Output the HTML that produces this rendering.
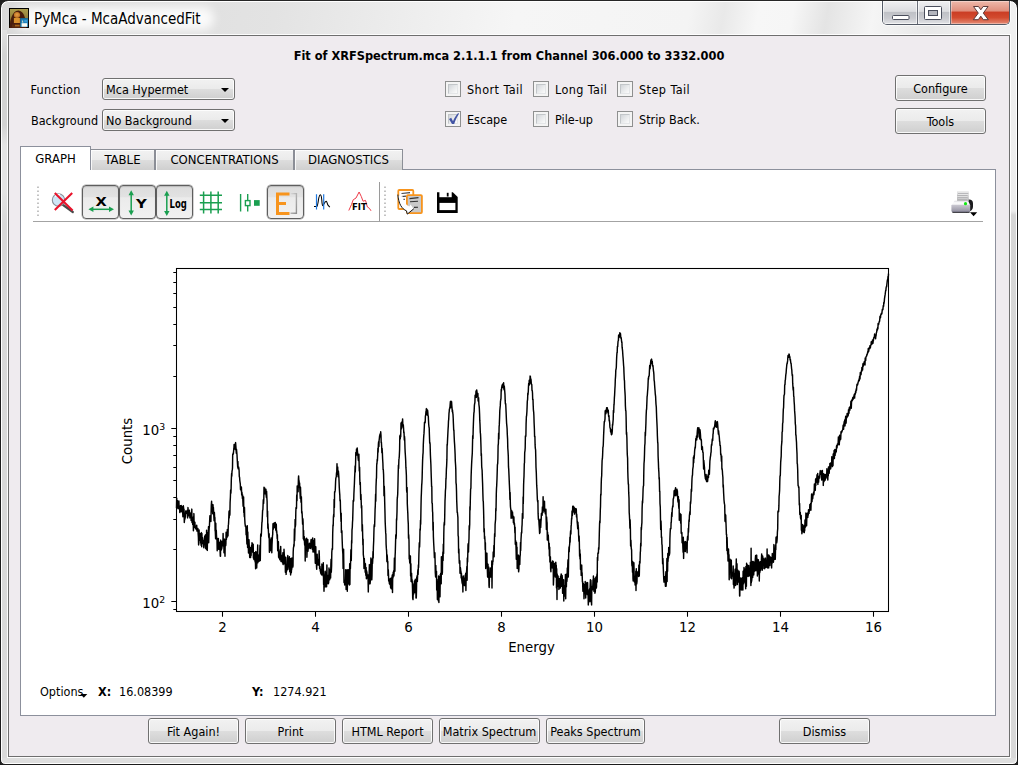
<!DOCTYPE html><html><head><meta charset="utf-8"><title>PyMca - McaAdvancedFit</title><style>
*{box-sizing:border-box;margin:0;padding:0}
html,body{width:1018px;height:765px;overflow:hidden;background:#1c1c1c}
body{position:relative;font-family:"DejaVu Sans Condensed","Liberation Sans",sans-serif;font-size:12.5px;color:#000}
.abs{position:absolute}
#win{position:absolute;left:0;top:0;width:1018px;height:765px;border:1px solid #1c1c1c;border-radius:8px 8px 5px 5px;
 background:linear-gradient(100deg,#d9d9d9 0%,#dedede 10%,#e3e3e3 24%,#ececec 34%,#f6f6f6 45%,#f4f4f4 60%,#e9e9e9 63%,#f7f7f7 66%,#f6f6f6 69%,#e4e4e4 72%,#f5f5f5 76%,#e8e8e8 81%,#f2f2f2 86%,#e4e4e4 100%);
 box-shadow:inset 0 0 0 1px #fff}
#sideL,#sideR{position:absolute;top:30px;width:5px;height:728px;background:#dcdcdc}
#sideL{left:2px;background:linear-gradient(#e2e2e2 0,#d3d3d3 25px,#d3d3d3 95px,#e4e4e4 115px,#e4e4e4 160px,#d8d8d8 195px,#dadada 100%)}#sideR{left:1011px;background:linear-gradient(#efefef 0,#ededed 181px,#d6d6d6 185px,#d8d8d8 100%)}
#botF{position:absolute;left:2px;top:758px;width:1014px;height:5px;background:#dedede;border-radius:0 0 5px 5px}
#client{position:absolute;left:8px;top:35px;width:1002px;height:722px;border:1px solid #6e6e6e;background:#efebef;box-shadow:0 0 0 1px rgba(255,255,255,.9)}
#title{position:absolute;left:34px;top:9px;font-size:15px;line-height:20px;white-space:nowrap;color:#000;text-shadow:0 0 6px #fff,0 0 10px #fff}
.lbl{position:absolute;white-space:nowrap;line-height:16px}
.btn{position:absolute;border:1px solid #707070;border-radius:3px;text-align:center;white-space:nowrap;
 background:linear-gradient(#f2f2f2 0%,#ebebeb 48%,#dddddd 52%,#cfcfcf 100%);box-shadow:inset 0 0 0 1px rgba(255,255,255,.85)}
.combo{position:absolute;border:1px solid #707070;border-radius:3px;white-space:nowrap;padding-left:3px;
 background:linear-gradient(#f2f2f2 0%,#ebebeb 48%,#dddddd 52%,#cfcfcf 100%);box-shadow:inset 0 0 0 1px rgba(255,255,255,.85)}
.combo i{position:absolute;right:5px;top:9px;width:0;height:0;border-left:4px solid transparent;border-right:4px solid transparent;border-top:4px solid #000}
.cb{position:absolute;width:16px;height:16px;border:1px solid #8e8f8f;background:#f4f4f4;padding:2px}
.cb b{display:block;width:10px;height:10px;border:1px solid #c2c6c9;border-right-color:#e4e6e8;border-bottom-color:#e4e6e8;background:linear-gradient(135deg,#d2d6d9 0%,#e6e8ea 45%,#fbfbfb 100%)}
.tab{position:absolute;top:149px;font-size:13px;height:21px;border:1px solid #8b8e96;border-bottom:none;text-align:center;line-height:20px;white-space:nowrap;
 background:linear-gradient(#f2f2f2 0%,#ebebeb 48%,#dddddd 52%,#cfcfcf 100%);box-shadow:inset 1px 1px 0 rgba(255,255,255,.8)}
#pane{position:absolute;left:20px;top:169px;width:976px;height:547px;border:1px solid #8c909c;background:#fff}
#tab0{font-size:13px;position:absolute;left:20px;top:146px;width:71px;height:24px;border:1px solid #8c909c;border-bottom:none;background:#fff;text-align:center;line-height:23px}
.tbtn{position:absolute;top:185px;width:37px;height:34px;border:1px solid #5e5e5e;border-radius:4px;
 background:linear-gradient(#dcdcdc 0%,#e2e2e2 33%,#ebebeb 37%,#f1f1f1 100%);box-shadow:inset 0 1px 1px rgba(0,0,0,.16),0 0 0 .5px rgba(80,80,80,.5)}
</style></head><body>
<div id="win"></div><div id="sideL"></div><div id="sideR"></div><div id="botF"></div>
<div class="abs" style="left:882px;top:1px;width:128px;height:24px;border:1px solid #545a66;border-top:none;border-radius:0 0 5px 5px;overflow:hidden;box-shadow:0 0 0 1px rgba(255,255,255,.7)"><div class="abs" style="left:0;top:0;width:35px;height:23px;background:linear-gradient(#f0f0f2 0%,#dcdde0 45%,#bfc1c6 50%,#c9cacf 75%,#e2e3e6 100%);border-right:1px solid #6a6e78;box-shadow:inset 0 0 0 1px rgba(255,255,255,.6)"></div><div class="abs" style="left:35px;top:0;width:33px;height:23px;background:linear-gradient(#f0f0f2 0%,#dcdde0 45%,#bfc1c6 50%,#c9cacf 75%,#e2e3e6 100%);border-right:1px solid #6a6e78;box-shadow:inset 0 0 0 1px rgba(255,255,255,.6)"></div><div class="abs" style="left:68px;top:0;width:59px;height:23px;background:linear-gradient(#efb9ab 0%,#e0907e 42%,#cb3e25 50%,#d24a2e 72%,#e58c76 100%);box-shadow:inset 0 0 0 1px rgba(255,255,255,.35)"></div><svg class="abs" style="left:0;top:0" width="127" height="23" viewBox="0 0 127 23"><rect x="9.5" y="14.5" width="16.5" height="4" rx="1" fill="#fff" stroke="#4a4e5c" stroke-width="1"/><rect x="41.5" y="5.5" width="17" height="13" rx="1" fill="#fff" stroke="#4a4e5c" stroke-width="1"/><rect x="45.5" y="9.5" width="9" height="5" fill="#b4b6be" stroke="#4a4e5c" stroke-width="1"/><path d="M90.5 5.5 h5 l2.3 3.3 l2.3 -3.3 h5 l-4.8 6.6 l5 6.6 h-5 l-2.5 -3.5 l-2.5 3.5 h-5 l5 -6.6 z" fill="#fff" stroke="#5a3a3a" stroke-width="1" stroke-linejoin="round"/></svg></div>
<div class="abs" style="left:7px;top:0;width:1004px;height:1px;background:#262626"></div>
<div class="abs" style="left:14px;top:7px;width:200px;height:23px;border-radius:11px;background:rgba(255,255,255,.85);filter:blur(5px)"></div>
<svg class="abs" style="left:9px;top:8px" width="20" height="20" viewBox="0 0 20 20"><defs><linearGradient id="mlb" x1="0" y1="0" x2="0" y2="1"><stop offset="0" stop-color="#ab9d4c"/><stop offset="0.55" stop-color="#8f7a38"/><stop offset="1" stop-color="#5b3a18"/></linearGradient><radialGradient id="mlf" cx="50%" cy="45%" r="60%"><stop offset="0" stop-color="#e6a048"/><stop offset="1" stop-color="#b8691e"/></radialGradient><filter id="mbl" x="-20%" y="-20%" width="140%" height="140%"><feGaussianBlur stdDeviation="0.7"/></filter></defs><rect x="0" y="0" width="20" height="20" fill="#000"/><rect x="1" y="1" width="18" height="18" fill="url(#mlb)"/><g filter="url(#mbl)"><path d="M0.5 20 C1 12 3 3.2 9.3 2.6 C15 3 16.6 10 17.5 20 Z" fill="#4a1f08"/><ellipse cx="8" cy="7" rx="3.1" ry="2.9" fill="url(#mlf)"/><path d="M4.9 10 h6 v5 h-6 z" fill="#d8902f"/><path d="M3 16.5 h9 v3 h-9 z" fill="#5a2a0e"/><path d="M6 16.8 h4.5 v1.6 h-4.5 z" fill="#a8641f"/></g><rect x="11.3" y="10.2" width="7.7" height="8.8" fill="#1d7fb8"/><rect x="11.3" y="10.2" width="7.7" height="1" fill="#16648f"/><rect x="12.6" y="15.2" width="5.6" height="3.5" fill="#fbfbf2"/><path d="M13.5 11.8 l0.9 2.6 h-1.4 z" fill="#e9e2c8"/><rect x="15.3" y="12" width="3" height="2.2" fill="#3b9bd4"/></svg>
<div id="title">PyMca - McaAdvancedFit</div>
<div id="client"></div>
<div class="lbl" style="left:0;width:1018px;top:48px;text-align:center;font-weight:bold;font-size:12.65px">Fit of XRFSpectrum.mca 2.1.1.1 from Channel 306.000 to 3332.000</div>
<div class="lbl" style="left:30.5px;top:82px;letter-spacing:0.3px">Function</div>
<div class="lbl" style="left:31px;top:113px">Background</div>
<div class="combo" style="left:102px;top:78px;width:133px;height:22px;line-height:21.5px">Mca Hypermet<i></i></div>
<div class="combo" style="left:102px;top:109px;width:133px;height:22px;line-height:21.5px">No Background<i></i></div>
<div class="cb" style="left:445px;top:81px"><b></b></div><div class="lbl" style="left:467px;top:81.6px;letter-spacing:0.45px">Short Tail</div>
<div class="cb" style="left:533px;top:81px"><b></b></div><div class="lbl" style="left:555px;top:81.6px;letter-spacing:0.4px">Long Tail</div>
<div class="cb" style="left:617px;top:81px"><b></b></div><div class="lbl" style="left:639px;top:81.6px;letter-spacing:0.45px">Step Tail</div>
<div class="cb" style="left:445px;top:111px"><b></b><svg class="abs" style="left:1px;top:0px" width="14" height="14" viewBox="0 0 14 14"><path d="M2.0 7.0 L4.2 5.7 L6.0 9.2 C7.4 6.0 9.0 3.2 11.2 1.1 L12.0 1.7 C9.9 4.8 8.3 8.2 7.2 12.0 L5.0 12.0 Z" fill="#4254a4"/></svg></div><div class="lbl" style="left:467px;top:111.6px;letter-spacing:0px">Escape</div>
<div class="cb" style="left:533px;top:111px"><b></b></div><div class="lbl" style="left:555px;top:111.6px;letter-spacing:0px">Pile-up</div>
<div class="cb" style="left:617px;top:111px"><b></b></div><div class="lbl" style="left:639px;top:111.6px;letter-spacing:0px">Strip Back.</div>
<div class="btn" style="left:895px;top:75px;width:91px;height:26px;line-height:25px">Configure</div>
<div class="btn" style="left:895px;top:108px;width:91px;height:26px;line-height:25px">Tools</div>
<div id="pane"></div>
<div class="tab" style="left:90px;width:65px">TABLE</div>
<div class="tab" style="left:155px;width:139px">CONCENTRATIONS</div>
<div class="tab" style="left:294px;width:109px">DIAGNOSTICS</div>
<div id="tab0">GRAPH</div>
<div class="tbtn" style="left:82px"></div><div class="tbtn" style="left:119px"></div><div class="tbtn" style="left:156px"></div><div class="tbtn" style="left:267px"></div><svg class="abs" style="left:0;top:0" width="1018" height="765" viewBox="0 0 1018 765"><path d="M33 221.5 H983" stroke="#a3a3a3" stroke-width="1.2"/><path d="M379.5 182 V221.5" stroke="#9a9a9a" stroke-width="1"/><path d="M38 186.5 V217" stroke="#b4b4b4" stroke-width="1.6" stroke-dasharray="1.6 2.4"/><path d="M385 186.5 V217" stroke="#b4b4b4" stroke-width="1.6" stroke-dasharray="1.6 2.4"/><path d="M62.5 204.5 L72.8 212" stroke="#4a4a4a" stroke-width="2.2" stroke-linecap="round"/><circle cx="58.5" cy="200" r="6.2" fill="#cfe6f6" stroke="#8a8f98" stroke-width="1.1"/><path d="M55.2 196.5 A4.5 4.5 0 0 1 60 194.6" stroke="#fff" stroke-width="1.4" fill="none"/><path d="M54.8 193 L72.6 210.4 M72.2 193 L54.8 210" stroke="#e8132b" stroke-width="2.1" stroke-linecap="butt"/><text transform="translate(101.2 205.8) scale(1.16 1)" text-anchor="middle" font-family="'DejaVu Sans',sans-serif" font-weight="bold" font-size="12.6">X</text><path d="M92 209.3 H110.5" stroke="#1a9f50" stroke-width="1.5"/><path d="M88.4 209.3 l5 -2.7 v5.4 z M114 209.3 l-5 -2.7 v5.4 z" fill="#1a9f50"/><path d="M131.2 194 V212" stroke="#1a9f50" stroke-width="1.5"/><path d="M131.2 190.2 l2.7 5 h-5.4 z M131.2 215.4 l2.7 -5 h-5.4 z" fill="#1a9f50"/><text transform="translate(141.4 207.6) scale(1.18 1)" text-anchor="middle" font-family="'DejaVu Sans',sans-serif" font-weight="bold" font-size="12.6">Y</text><path d="M166.8 194.6 V212.4" stroke="#1a9f50" stroke-width="1.5"/><path d="M166.8 190.8 l2.7 5 h-5.4 z M166.8 216 l2.7 -5 h-5.4 z" fill="#1a9f50"/><text x="169.6" y="208" font-family="'DejaVu Sans Condensed','DejaVu Sans',sans-serif" font-weight="bold" font-size="12" textLength="17.2" lengthAdjust="spacingAndGlyphs">Log</text><path d="M203.6 191.6 V213.4 M210.9 191.6 V213.4 M218.2 191.6 V213.4 M199.8 195.3 H222 M199.8 202.8 H222 M199.8 209.6 H222" stroke="#1a9f50" stroke-width="1.5" fill="none"/><path d="M240.6 194 V211.5 M247.7 194 V211.5" stroke="#1a9f50" stroke-width="1.4"/><rect x="245.4" y="200.6" width="4.6" height="5" fill="#fff" stroke="#1a9f50" stroke-width="1.4"/><rect x="254" y="200.1" width="5.7" height="5.7" fill="#1a9f50"/><defs><linearGradient id="brk" x1="0" y1="0" x2="1" y2="1"><stop offset="0" stop-color="#d8d8d8"/><stop offset="1" stop-color="#8f8f8f"/></linearGradient></defs><path d="M290.5 193.6 H296.4 V213.2 H290.5" stroke="url(#brk)" stroke-width="1.4" fill="none"/><path d="M277.5 192.6 V214.9 M276 194.1 H289.5 M276 203.6 H286 M276 213.4 H289.5" stroke="#f7941d" stroke-width="3" fill="none"/><path d="M314 206.4 H316.9 C317.8 206 318.3 200 318.9 197.5 C319.4 195.4 319.8 194.7 320.4 194.7 C321.2 194.8 321.5 197 321.8 200 C322 203 322.1 205.2 322.7 205.6 C323.6 205.8 324.4 201.4 326.2 201.3 C327.2 201.6 327.2 204 328 205.2 L329.8 207.2" stroke="#000" stroke-width="1.05" fill="none"/><path d="M316.5 194.2 V209.6 M323.7 194.2 V209.6" stroke="#1e78e0" stroke-width="1.2"/><path d="M348.8 210.5 L351.5 204.5 L353.2 199.8 L356 198 L359.1 192 L361.3 196.5 L363 201.2 L365.5 200.4 L367.4 207 L369.4 208.3 L371 210.8" stroke="#ee3a48" stroke-width="1" fill="none"/><text x="352" y="210" font-family="'DejaVu Sans',sans-serif" font-weight="bold" font-size="9.2" textLength="14.8" lengthAdjust="spacingAndGlyphs">FIT</text><rect x="398.3" y="190" width="15" height="19" rx="1" fill="#fff" stroke="#f7941d" stroke-width="1.8"/><path d="M401.5 193.5 L410 192.6 M401.5 196.6 L406 196.1 M401.5 199.6 L405 199.2" stroke="#444" stroke-width="1.1"/><rect x="406.9" y="195.1" width="15" height="18" rx="1" fill="#c9c9c9" stroke="#f7941d" stroke-width="1.8"/><path d="M409.5 198.6 L418.5 197.6 M410 201.8 L418 201.2 M414 207.4 L418 207.2" stroke="#333" stroke-width="1.1"/><path d="M397.6 195.6 C398.4 204 401.8 208.9 406.5 210.9 L407.4 214 L413.6 209 L410.6 204.6 L409.4 206.4 C405.6 205 403.4 201 402.8 196.5 Z" fill="#fff"/><path d="M397.9 195 C398.6 204 401.8 208.8 406.5 210.9 L407.3 214.1 L413.5 209" fill="none" stroke="#111" stroke-width="1" stroke-linejoin="round" stroke-linecap="round"/><path d="M437 192.2 H452.8 L457.7 197 V212.9 H437 Z" fill="#000"/><rect x="439.4" y="192" width="12.3" height="5.2" fill="#fff"/><rect x="446.8" y="192.8" width="1.8" height="3.7" fill="#000"/><rect x="439.5" y="202.9" width="15.9" height="7.2" fill="#fff"/><defs><linearGradient id="prb" x1="0" y1="0" x2="0" y2="1"><stop offset="0" stop-color="#c9c7d0"/><stop offset="0.7" stop-color="#9f9dab"/><stop offset="1" stop-color="#77758a"/></linearGradient><linearGradient id="prp" x1="0" y1="0" x2="0" y2="1"><stop offset="0" stop-color="#e9e9e9"/><stop offset="1" stop-color="#b2b2b4"/></linearGradient><linearGradient id="prt" x1="0" y1="0" x2="0" y2="1"><stop offset="0" stop-color="#dcdce0"/><stop offset="0.5" stop-color="#ffffff"/><stop offset="1" stop-color="#e2e2e6"/></linearGradient></defs><path d="M966 199.4 H969 Q973 199.6 973 203.4 V206.6 Q973 210.4 969.4 211.4 L966 212.6 Z" fill="#1b1b1e"/><rect x="957" y="191.2" width="11.8" height="10" fill="url(#prp)"/><path d="M958 192.4 H968.4 M958 194.4 H968.4 M957.4 196.6 H967.6 M957.8 198.8 H967.6" stroke="#f2f2f2" stroke-width="0.7"/><path d="M958 193.4 H968.4 M957.4 195.6 H967.6 M957.6 197.8 H967.6 M958 199.8 H967" stroke="#a4a4a6" stroke-width="0.7"/><path d="M954.6 200.8 H968.2 L970.2 205.2 H951.4 Z" fill="url(#prt)"/><path d="M951.4 205 H970.2 V210.6 Q970.2 212.6 968.2 212.6 H953.4 Q951.4 212.6 951.4 210.6 Z" fill="url(#prb)"/><path d="M952.4 212.4 H969.6" stroke="#26262a" stroke-width="0.9"/><circle cx="965.5" cy="203.7" r="1.6" fill="#12e812"/><path d="M970 212.3 H977.2 L973.6 216.2 Z" fill="#000"/></svg>
<svg class="abs" style="left:0;top:0" width="1018" height="765" viewBox="0 0 1018 765" font-family="'DejaVu Sans',sans-serif" font-size="13.33"><polyline points="176.5,508.0 176.7,498.1 177.0,508.6 177.2,503.0 177.4,500.4 177.7,505.0 177.9,505.0 178.1,507.6 178.4,503.2 178.6,508.4 178.9,501.0 179.1,507.4 179.3,509.1 179.6,506.3 179.8,512.5 180.0,511.5 180.3,506.7 180.5,505.7 180.7,508.0 181.0,511.5 181.2,505.4 181.4,506.5 181.7,511.8 181.9,509.3 182.1,506.7 182.4,511.3 182.6,510.9 182.9,516.7 183.1,509.3 183.3,505.7 183.6,507.8 183.8,511.5 184.0,509.1 184.3,522.5 184.5,520.2 184.7,516.9 185.0,518.9 185.2,513.1 185.4,517.2 185.7,510.9 185.9,511.1 186.1,512.5 186.4,511.5 186.6,512.9 186.9,513.6 187.1,513.8 187.3,510.2 187.6,517.9 187.8,515.3 188.0,507.6 188.3,516.0 188.5,514.3 188.7,513.6 189.0,513.6 189.2,511.3 189.4,510.2 189.7,514.8 189.9,517.9 190.1,517.2 190.4,514.1 190.6,516.0 190.9,512.9 191.1,520.4 191.3,517.2 191.6,518.4 191.8,509.1 192.0,522.5 192.3,519.7 192.5,517.7 192.7,524.6 193.0,517.2 193.2,519.4 193.4,530.8 193.7,526.3 193.9,513.6 194.1,523.8 194.4,527.4 194.6,525.4 194.9,522.2 195.1,527.6 195.3,526.8 195.6,527.1 195.8,528.8 196.0,527.9 196.3,526.0 196.5,529.6 196.7,525.2 197.0,531.1 197.2,530.2 197.4,530.8 197.7,529.6 197.9,528.5 198.1,532.9 198.4,537.5 198.6,544.9 198.9,542.8 199.1,529.9 199.3,540.5 199.6,535.3 199.8,537.9 200.0,535.0 200.3,533.8 200.5,539.8 200.7,542.5 201.0,543.9 201.2,545.3 201.4,532.6 201.7,546.7 201.9,533.5 202.1,541.8 202.4,537.5 202.6,539.1 202.9,543.5 203.1,540.5 203.3,541.8 203.6,543.2 203.8,547.8 204.0,546.4 204.3,541.1 204.5,537.9 204.7,536.3 205.0,538.2 205.2,535.3 205.4,541.5 205.7,548.5 205.9,534.4 206.1,545.3 206.4,549.3 206.6,530.2 206.9,543.2 207.1,535.6 207.3,550.4 207.6,532.9 207.8,535.6 208.0,534.7 208.3,534.4 208.5,526.8 208.7,542.8 209.0,531.4 209.2,527.9 209.4,526.8 209.7,519.9 209.9,515.7 210.1,518.7 210.4,516.2 210.6,516.9 210.9,521.5 211.1,512.2 211.3,505.4 211.6,501.2 211.8,509.1 212.0,511.5 212.3,504.8 212.5,508.6 212.7,513.8 213.0,504.6 213.2,510.0 213.4,507.4 213.7,513.4 213.9,517.4 214.1,520.7 214.4,512.5 214.6,516.7 214.9,517.7 215.1,530.5 215.3,531.4 215.6,538.8 215.8,523.3 216.0,536.6 216.3,530.2 216.5,535.3 216.7,538.8 217.0,540.1 217.2,550.8 217.4,538.5 217.7,539.1 217.9,545.3 218.1,545.6 218.4,538.5 218.6,549.3 218.9,546.0 219.1,549.3 219.3,544.6 219.6,547.1 219.8,542.2 220.0,548.9 220.3,556.3 220.5,556.3 220.7,540.1 221.0,544.9 221.2,549.7 221.4,550.0 221.7,547.1 221.9,548.2 222.1,541.5 222.4,544.2 222.6,543.2 222.9,543.2 223.1,533.5 223.3,546.0 223.6,546.0 223.8,541.1 224.0,552.7 224.3,542.2 224.5,539.1 224.7,548.5 225.0,556.3 225.2,542.8 225.4,541.1 225.7,545.6 225.9,543.9 226.1,532.3 226.4,539.5 226.6,536.6 226.9,536.3 227.1,537.2 227.3,529.6 227.6,530.5 227.8,534.4 228.0,535.9 228.3,525.2 228.5,524.4 228.7,520.7 229.0,511.5 229.2,517.9 229.4,510.4 229.7,515.3 229.9,514.3 230.1,502.6 230.4,497.1 230.6,490.0 230.9,493.3 231.1,489.0 231.3,480.4 231.6,473.6 231.8,476.2 232.0,471.5 232.3,469.7 232.5,468.0 232.7,454.3 233.0,454.7 233.2,453.0 233.4,453.6 233.7,449.8 233.9,448.7 234.1,444.5 234.4,446.2 234.6,444.5 234.9,445.8 235.1,446.8 235.3,449.5 235.6,442.6 235.8,445.3 236.0,448.3 236.3,453.2 236.5,449.2 236.7,451.5 237.0,454.7 237.2,458.6 237.4,462.2 237.7,467.1 237.9,461.4 238.1,468.7 238.4,468.7 238.6,466.9 238.9,468.7 239.1,470.6 239.3,476.6 239.6,477.5 239.8,480.3 240.0,481.8 240.3,484.0 240.5,489.5 240.7,488.2 241.0,488.3 241.2,491.0 241.4,487.0 241.7,494.9 241.9,492.1 242.1,493.7 242.4,498.5 242.6,494.9 242.9,501.6 243.1,506.3 243.3,504.4 243.6,497.0 243.8,512.5 244.0,511.5 244.3,516.7 244.5,507.4 244.7,518.2 245.0,523.6 245.2,524.9 245.4,526.3 245.7,526.0 245.9,527.4 246.1,534.7 246.4,531.7 246.6,535.9 246.9,543.9 247.1,538.5 247.3,525.7 247.6,547.4 247.8,532.0 248.0,542.5 248.3,546.0 248.5,553.1 248.7,544.2 249.0,539.8 249.2,545.3 249.4,548.2 249.7,557.6 249.9,554.3 250.1,547.4 250.4,554.7 250.6,557.6 250.9,547.8 251.1,555.5 251.3,550.4 251.6,545.6 251.8,550.8 252.0,542.8 252.3,543.9 252.5,550.0 252.7,552.0 253.0,552.7 253.2,544.2 253.4,558.0 253.7,557.6 253.9,559.3 254.1,559.7 254.4,552.7 254.6,554.7 254.9,552.7 255.1,561.9 255.3,555.9 255.6,568.8 255.8,551.6 256.0,555.5 256.3,552.0 256.5,555.1 256.7,567.9 257.0,560.1 257.2,556.8 257.4,557.2 257.7,544.9 257.9,562.8 258.1,556.3 258.4,557.2 258.6,561.4 258.9,555.1 259.1,560.1 259.3,555.5 259.6,561.0 259.8,550.4 260.0,545.3 260.3,560.6 260.5,545.3 260.7,534.1 261.0,535.0 261.2,536.3 261.4,533.8 261.7,526.8 261.9,522.5 262.1,521.7 262.4,515.3 262.6,510.6 262.9,509.7 263.1,504.8 263.3,499.8 263.6,503.4 263.8,498.9 264.0,487.2 264.3,493.0 264.5,489.5 264.7,488.0 265.0,493.7 265.2,493.3 265.4,489.8 265.7,492.3 265.9,489.3 266.1,494.9 266.4,497.5 266.6,491.2 266.9,498.3 267.1,501.2 267.3,516.7 267.6,511.1 267.8,528.2 268.0,523.8 268.3,529.1 268.5,532.6 268.7,536.6 269.0,538.2 269.2,533.8 269.4,552.3 269.7,551.2 269.9,539.8 270.1,550.8 270.4,541.8 270.6,548.5 270.9,542.8 271.1,537.9 271.3,550.4 271.6,540.8 271.8,552.7 272.0,545.3 272.3,539.1 272.5,535.6 272.7,534.7 273.0,523.8 273.2,529.4 273.4,525.4 273.7,525.4 273.9,527.9 274.1,523.0 274.4,527.1 274.6,527.4 274.9,523.3 275.1,522.5 275.3,522.5 275.6,526.8 275.8,530.2 276.0,528.2 276.3,524.1 276.5,532.3 276.7,530.8 277.0,535.0 277.2,538.8 277.4,534.7 277.7,550.8 277.9,545.3 278.1,546.4 278.4,541.8 278.6,557.2 278.9,549.7 279.1,554.3 279.3,558.4 279.6,552.7 279.8,559.7 280.0,553.5 280.3,552.7 280.5,551.2 280.7,546.4 281.0,561.4 281.2,558.0 281.4,559.7 281.7,560.1 281.9,555.5 282.1,558.9 282.4,562.8 282.6,560.1 282.9,552.7 283.1,564.6 283.3,563.7 283.6,560.6 283.8,561.4 284.0,549.3 284.3,555.1 284.5,556.3 284.7,564.1 285.0,559.7 285.2,561.0 285.4,572.3 285.7,557.2 285.9,561.0 286.1,574.4 286.4,567.9 286.6,571.3 286.9,567.9 287.1,564.6 287.3,569.8 287.6,557.6 287.8,555.5 288.0,566.9 288.3,565.5 288.5,560.1 288.7,564.1 289.0,569.3 289.2,560.1 289.4,556.8 289.7,571.8 289.9,570.8 290.1,566.0 290.4,558.9 290.6,574.9 290.9,570.3 291.1,558.4 291.3,572.8 291.6,567.9 291.8,569.3 292.0,558.0 292.3,565.5 292.5,563.2 292.7,558.4 293.0,566.9 293.2,552.0 293.4,548.2 293.7,546.7 293.9,544.2 294.1,546.0 294.4,529.1 294.6,540.8 294.9,531.7 295.1,519.4 295.3,526.8 295.6,524.6 295.8,512.2 296.0,507.8 296.3,507.4 296.5,508.2 296.7,495.1 297.0,500.8 297.2,485.9 297.4,487.2 297.7,490.0 297.9,491.2 298.1,491.7 298.4,479.0 298.6,475.9 298.9,481.5 299.1,480.7 299.3,487.0 299.6,483.0 299.8,488.5 300.0,492.4 300.3,498.5 300.5,487.3 300.7,492.8 301.0,502.2 301.2,500.8 301.4,496.8 301.7,512.9 301.9,511.3 302.1,513.1 302.4,518.9 302.6,524.1 302.9,518.7 303.1,522.2 303.3,538.8 303.6,530.5 303.8,540.1 304.0,538.2 304.3,536.6 304.5,542.2 304.7,545.3 305.0,538.8 305.2,561.0 305.4,540.1 305.7,541.8 305.9,544.9 306.1,550.0 306.4,541.1 306.6,538.2 306.9,557.2 307.1,551.6 307.3,546.0 307.6,551.2 307.8,539.5 308.0,551.2 308.3,544.6 308.5,545.6 308.7,547.1 309.0,548.5 309.2,545.6 309.4,543.2 309.7,545.3 309.9,545.6 310.1,546.0 310.4,545.3 310.6,548.5 310.9,540.8 311.1,539.5 311.3,544.2 311.6,547.1 311.8,545.6 312.0,539.8 312.3,549.3 312.5,540.5 312.7,537.9 313.0,552.0 313.2,542.5 313.4,550.4 313.7,544.6 313.9,540.5 314.1,552.0 314.4,548.9 314.6,538.8 314.9,552.7 315.1,556.8 315.3,563.2 315.6,553.5 315.8,546.7 316.0,560.1 316.3,554.7 316.5,566.4 316.7,569.3 317.0,555.9 317.2,554.3 317.4,563.7 317.7,559.3 317.9,562.3 318.1,565.0 318.4,565.0 318.6,563.7 318.9,561.4 319.1,550.8 319.3,555.1 319.6,568.4 319.8,568.4 320.0,566.4 320.3,571.3 320.5,570.3 320.7,572.8 321.0,573.9 321.2,573.3 321.4,569.3 321.7,574.9 321.9,564.1 322.1,572.3 322.4,570.3 322.6,572.3 322.9,569.3 323.1,576.0 323.3,562.8 323.6,584.4 323.8,580.9 324.0,591.3 324.3,579.2 324.5,574.9 324.7,586.8 325.0,573.9 325.2,571.3 325.4,576.0 325.7,586.8 325.9,572.8 326.1,573.3 326.4,581.5 326.6,586.8 326.9,565.0 327.1,579.2 327.3,576.5 327.6,576.5 327.8,575.4 328.0,583.8 328.3,583.8 328.5,583.2 328.7,582.1 329.0,567.9 329.2,577.0 329.4,572.3 329.7,579.8 329.9,569.8 330.1,570.8 330.4,578.1 330.6,578.1 330.9,563.7 331.1,559.3 331.3,572.3 331.6,566.0 331.8,552.3 332.0,550.0 332.3,548.2 332.5,549.3 332.7,533.5 333.0,524.9 333.2,526.0 333.4,517.4 333.7,514.3 333.9,516.7 334.1,499.4 334.4,507.6 334.6,491.7 334.9,492.1 335.1,490.9 335.3,489.5 335.6,481.5 335.8,478.5 336.0,477.6 336.3,476.6 336.5,472.8 336.7,474.5 337.0,463.8 337.2,470.4 337.4,472.1 337.7,466.9 337.9,473.0 338.1,476.8 338.4,471.0 338.6,473.4 338.9,477.5 339.1,482.7 339.3,487.8 339.6,492.6 339.8,494.9 340.0,501.0 340.3,500.0 340.5,508.9 340.7,513.6 341.0,521.5 341.2,513.1 341.4,532.6 341.7,532.0 341.9,530.8 342.1,538.2 342.4,546.0 342.6,550.4 342.9,554.3 343.1,568.4 343.3,563.2 343.6,549.3 343.8,563.7 344.0,582.6 344.3,580.3 344.5,582.1 344.7,585.0 345.0,584.4 345.2,583.2 345.4,583.2 345.7,569.8 345.9,576.0 346.1,589.4 346.4,580.9 346.6,579.2 346.9,586.2 347.1,569.8 347.3,591.3 347.6,577.0 347.8,581.5 348.0,578.7 348.3,569.8 348.5,583.8 348.7,580.9 349.0,571.3 349.2,583.8 349.4,585.0 349.7,563.7 349.9,584.4 350.1,563.7 350.4,568.8 350.6,561.4 350.9,549.7 351.1,556.8 351.3,560.6 351.6,540.8 351.8,543.2 352.0,529.9 352.3,527.6 352.5,522.2 352.7,519.7 353.0,508.4 353.2,500.8 353.4,500.2 353.7,501.0 353.9,493.7 354.1,489.8 354.4,483.7 354.6,478.1 354.9,471.9 355.1,465.9 355.3,472.1 355.6,462.5 355.8,452.6 356.0,454.5 356.3,454.8 356.5,449.1 356.7,450.9 357.0,455.1 357.2,447.9 357.4,450.5 357.7,453.8 357.9,454.8 358.1,457.9 358.4,460.5 358.6,456.8 358.9,454.2 359.1,463.5 359.3,471.1 359.6,467.3 359.8,479.0 360.0,484.8 360.3,482.4 360.5,491.9 360.7,499.6 361.0,494.4 361.2,501.6 361.4,508.0 361.7,505.7 361.9,517.4 362.1,531.1 362.4,524.6 362.6,532.6 362.9,544.9 363.1,539.1 363.3,554.3 363.6,556.8 363.8,559.3 364.0,568.4 364.3,558.4 364.5,563.7 364.7,565.5 365.0,563.2 365.2,572.3 365.4,563.7 365.7,573.3 365.9,575.4 366.1,567.4 366.4,578.7 366.6,570.8 366.9,572.3 367.1,574.9 367.3,577.6 367.6,578.1 367.8,575.4 368.0,574.9 368.3,591.9 368.5,577.6 368.7,581.5 369.0,583.8 369.2,571.8 369.4,564.6 369.7,571.3 369.9,577.6 370.1,583.8 370.4,580.3 370.6,572.3 370.9,558.0 371.1,567.4 371.3,566.4 371.6,579.2 371.8,579.8 372.0,575.4 372.3,558.9 372.5,563.7 372.7,561.0 373.0,551.6 373.2,558.0 373.4,547.1 373.7,540.8 373.9,532.3 374.1,526.3 374.4,524.4 374.6,526.5 374.9,516.5 375.1,509.1 375.3,505.9 375.6,494.2 375.8,501.2 376.0,487.0 376.3,479.5 376.5,477.6 376.7,465.2 377.0,463.2 377.2,459.5 377.4,461.0 377.7,455.0 377.9,448.2 378.1,452.3 378.4,444.1 378.6,441.8 378.9,446.6 379.1,440.1 379.3,439.1 379.6,435.8 379.8,436.9 380.0,434.0 380.3,434.2 380.5,435.6 380.7,431.7 381.0,435.6 381.2,442.7 381.4,442.2 381.7,447.2 381.9,452.8 382.1,448.4 382.4,453.4 382.6,458.7 382.9,463.2 383.1,469.7 383.3,469.4 383.6,474.7 383.8,483.7 384.0,495.7 384.3,486.2 384.5,493.1 384.7,502.0 385.0,513.4 385.2,522.2 385.4,526.5 385.7,532.9 385.9,534.4 386.1,544.2 386.4,548.9 386.6,550.8 386.9,561.4 387.1,554.7 387.3,556.8 387.6,563.2 387.8,561.4 388.0,575.4 388.3,569.8 388.5,574.4 388.7,580.9 389.0,579.2 389.2,581.5 389.4,583.8 389.7,580.3 389.9,584.4 390.1,578.7 390.4,583.8 390.6,587.5 390.9,588.1 391.1,578.1 391.3,588.7 391.6,580.9 391.8,585.0 392.0,577.6 392.3,574.9 392.5,592.6 392.7,575.4 393.0,578.1 393.2,572.3 393.4,574.4 393.7,570.8 393.9,576.0 394.1,572.8 394.4,558.0 394.6,559.3 394.9,571.3 395.1,555.9 395.3,552.0 395.6,540.8 395.8,534.7 396.0,538.8 396.3,535.3 396.5,518.9 396.7,520.2 397.0,512.0 397.2,499.4 397.4,497.7 397.7,494.2 397.9,486.7 398.1,477.2 398.4,465.2 398.6,468.4 398.9,459.5 399.1,458.2 399.3,456.3 399.6,449.8 399.8,435.7 400.0,439.2 400.3,438.6 400.5,434.6 400.7,436.7 401.0,422.9 401.2,429.1 401.4,426.5 401.7,423.7 401.9,422.0 402.1,421.6 402.4,422.1 402.6,418.9 402.9,426.4 403.1,427.9 403.3,424.8 403.6,428.7 403.8,433.0 404.0,432.0 404.3,439.9 404.5,436.2 404.7,438.6 405.0,448.5 405.2,452.6 405.4,455.5 405.7,460.9 405.9,467.4 406.1,469.7 406.4,475.8 406.6,490.2 406.9,492.4 407.1,487.5 407.3,503.8 407.6,509.7 407.8,513.1 408.0,519.2 408.3,524.1 408.5,538.2 408.7,534.7 409.0,540.8 409.2,558.9 409.4,555.1 409.7,562.8 409.9,558.0 410.1,563.7 410.4,555.9 410.6,576.0 410.9,563.7 411.1,581.5 411.3,573.3 411.6,573.3 411.8,582.1 412.0,579.2 412.3,582.1 412.5,588.7 412.7,598.1 413.0,599.6 413.2,594.0 413.4,585.0 413.7,594.0 413.9,583.8 414.1,590.0 414.4,580.9 414.6,584.4 414.9,590.6 415.1,592.6 415.3,579.2 415.6,589.4 415.8,580.9 416.0,598.1 416.3,598.1 416.5,590.0 416.7,577.0 417.0,581.5 417.2,575.4 417.4,581.5 417.7,572.3 417.9,569.8 418.1,574.4 418.4,565.0 418.6,567.4 418.9,554.3 419.1,548.5 419.3,542.8 419.6,547.1 419.8,541.1 420.0,529.1 420.3,529.9 420.5,520.2 420.7,524.4 421.0,506.5 421.2,497.3 421.4,493.1 421.7,485.1 421.9,482.9 422.1,478.8 422.4,467.3 422.6,460.5 422.9,454.6 423.1,452.8 423.3,444.8 423.6,438.5 423.8,435.3 424.0,433.4 424.3,427.4 424.5,422.3 424.7,422.7 425.0,422.8 425.2,422.2 425.4,416.1 425.7,414.8 425.9,412.2 426.1,410.9 426.4,408.6 426.6,410.8 426.9,409.2 427.1,415.1 427.3,410.4 427.6,410.3 427.8,412.0 428.0,415.6 428.3,416.1 428.5,420.5 428.7,424.2 429.0,427.3 429.2,427.6 429.4,434.5 429.7,443.3 429.9,442.5 430.1,444.1 430.4,454.8 430.6,458.7 430.9,464.8 431.1,471.7 431.3,477.8 431.6,486.7 431.8,486.5 432.0,503.0 432.3,503.4 432.5,511.1 432.7,512.5 433.0,530.2 433.2,522.2 433.4,536.6 433.7,543.5 433.9,546.7 434.1,550.8 434.4,557.6 434.6,552.7 434.9,552.7 435.1,561.4 435.3,572.8 435.6,577.0 435.8,565.5 436.0,573.3 436.3,575.4 436.5,571.3 436.7,590.0 437.0,579.2 437.2,583.8 437.4,599.6 437.7,581.5 437.9,587.5 438.1,590.6 438.4,601.1 438.6,576.0 438.9,602.6 439.1,576.5 439.3,580.3 439.6,587.5 439.8,596.0 440.0,596.7 440.3,574.4 440.5,580.3 440.7,573.3 441.0,574.4 441.2,583.8 441.4,556.8 441.7,570.8 441.9,571.3 442.1,574.4 442.4,572.3 442.6,558.4 442.9,552.0 443.1,560.6 443.3,544.2 443.6,553.5 443.8,533.8 444.0,525.4 444.3,522.2 444.5,524.9 444.7,517.2 445.0,500.8 445.2,497.3 445.4,491.0 445.7,487.7 445.9,479.8 446.1,478.2 446.4,469.1 446.6,466.4 446.9,459.4 447.1,444.5 447.3,445.2 447.6,438.6 447.8,434.8 448.0,430.5 448.3,425.9 448.5,420.8 448.7,419.6 449.0,413.2 449.2,411.8 449.4,409.0 449.7,408.9 449.9,407.7 450.1,405.3 450.4,401.5 450.6,406.1 450.9,407.6 451.1,401.2 451.3,402.7 451.6,401.7 451.8,405.6 452.0,407.5 452.3,411.6 452.5,410.0 452.7,412.7 453.0,414.4 453.2,418.0 453.4,423.3 453.7,430.1 453.9,430.0 454.1,435.5 454.4,441.6 454.6,444.1 454.9,449.7 455.1,453.9 455.3,461.0 455.6,465.3 455.8,469.4 456.0,482.6 456.3,484.9 456.5,490.7 456.7,500.2 457.0,507.6 457.2,512.5 457.4,512.2 457.7,515.5 457.9,517.4 458.1,535.3 458.4,536.9 458.6,553.1 458.9,548.9 459.1,558.0 459.3,563.2 459.6,563.7 459.8,560.6 460.0,573.3 460.3,567.4 460.5,568.4 460.7,570.3 461.0,571.8 461.2,578.1 461.4,573.3 461.7,578.7 461.9,580.9 462.1,582.6 462.4,583.8 462.6,578.7 462.9,591.9 463.1,577.0 463.3,576.0 463.6,578.1 463.8,582.1 464.0,580.9 464.3,583.8 464.5,585.6 464.7,583.8 465.0,581.5 465.2,574.9 465.4,580.3 465.7,573.3 465.9,590.6 466.1,578.7 466.4,572.3 466.6,571.3 466.9,566.4 467.1,580.3 467.3,558.0 467.6,561.9 467.8,553.5 468.0,544.9 468.3,543.5 468.5,552.0 468.7,544.2 469.0,538.2 469.2,525.7 469.4,529.6 469.7,524.4 469.9,506.7 470.1,510.2 470.4,496.8 470.6,489.3 470.9,488.2 471.1,476.8 471.3,471.3 471.6,464.1 471.8,460.2 472.0,457.4 472.3,453.0 472.5,444.2 472.7,435.8 473.0,438.6 473.2,429.0 473.4,423.8 473.7,416.0 473.9,412.7 474.1,412.1 474.4,405.4 474.6,403.9 474.9,402.5 475.1,395.4 475.3,395.0 475.6,395.4 475.8,395.4 476.0,391.1 476.3,397.4 476.5,390.7 476.7,389.9 477.0,392.0 477.2,395.0 477.4,396.5 477.7,393.4 477.9,393.4 478.1,401.1 478.4,400.2 478.6,397.6 478.9,404.5 479.1,405.9 479.3,407.7 479.6,414.5 479.8,420.9 480.0,424.1 480.3,432.5 480.5,433.9 480.7,437.7 481.0,447.1 481.2,455.8 481.4,453.7 481.7,466.6 481.9,468.5 482.1,470.1 482.4,479.1 482.6,483.7 482.9,494.6 483.1,500.8 483.3,501.4 483.6,510.9 483.8,519.2 484.0,532.0 484.3,528.8 484.5,538.8 484.7,536.3 485.0,540.5 485.2,549.7 485.4,542.8 485.7,568.4 485.9,554.7 486.1,556.3 486.4,562.8 486.6,565.5 486.9,553.1 487.1,565.5 487.3,568.4 487.6,577.0 487.8,574.4 488.0,564.1 488.3,577.6 488.5,572.3 488.7,566.9 489.0,585.6 489.2,587.5 489.4,578.7 489.7,573.3 489.9,572.8 490.1,577.0 490.4,567.9 490.6,568.8 490.9,577.0 491.1,577.0 491.3,575.4 491.6,575.4 491.8,561.0 492.0,588.1 492.3,562.8 492.5,565.0 492.7,561.9 493.0,561.4 493.2,552.0 493.4,557.2 493.7,554.3 493.9,545.6 494.1,556.8 494.4,540.8 494.6,533.8 494.9,536.6 495.1,524.4 495.3,522.2 495.6,519.4 495.8,508.4 496.0,511.1 496.3,493.7 496.5,488.3 496.7,485.7 497.0,478.7 497.2,472.3 497.4,464.9 497.7,463.5 497.9,458.5 498.1,445.9 498.4,443.3 498.6,433.3 498.9,439.0 499.1,426.9 499.3,424.9 499.6,417.2 499.8,410.5 500.0,408.5 500.3,405.4 500.5,401.0 500.7,400.2 501.0,398.3 501.2,389.6 501.4,391.3 501.7,387.0 501.9,386.8 502.1,385.1 502.4,385.7 502.6,384.3 502.9,385.6 503.1,387.8 503.3,384.6 503.6,382.8 503.8,386.8 504.0,389.7 504.3,386.0 504.5,388.5 504.7,390.7 505.0,394.6 505.2,400.9 505.4,403.9 505.7,403.7 505.9,407.7 506.1,412.3 506.4,419.2 506.6,423.4 506.9,426.4 507.1,428.8 507.3,434.4 507.6,439.4 507.8,448.2 508.0,450.8 508.3,456.3 508.5,466.9 508.7,468.8 509.0,475.4 509.2,480.1 509.4,484.8 509.7,491.2 509.9,499.6 510.1,492.4 510.4,505.9 510.6,508.0 510.9,510.0 511.1,518.2 511.3,510.4 511.6,510.6 511.8,511.1 512.0,516.9 512.3,517.9 512.5,512.0 512.7,515.3 513.0,516.0 513.2,516.5 513.4,522.8 513.7,516.7 513.9,516.9 514.1,524.4 514.4,523.0 514.6,525.4 514.9,532.9 515.1,527.1 515.3,544.2 515.6,540.5 515.8,542.8 516.0,546.7 516.3,559.3 516.5,542.5 516.7,549.3 517.0,547.1 517.2,568.4 517.4,561.9 517.7,557.6 517.9,555.5 518.1,561.9 518.4,555.1 518.6,571.8 518.9,569.3 519.1,555.9 519.3,558.0 519.6,558.9 519.8,564.6 520.0,556.8 520.3,554.3 520.5,542.5 520.7,550.4 521.0,539.5 521.2,536.3 521.4,532.6 521.7,532.9 521.9,527.1 522.1,524.6 522.4,513.6 522.6,515.5 522.9,518.2 523.1,497.1 523.3,503.8 523.6,485.1 523.8,479.8 524.0,476.4 524.3,463.6 524.5,462.9 524.7,452.6 525.0,450.6 525.2,447.8 525.4,436.1 525.7,436.6 525.9,435.1 526.1,423.6 526.4,416.3 526.6,415.9 526.9,411.6 527.1,406.9 527.3,401.4 527.6,399.4 527.8,393.3 528.0,394.6 528.3,391.3 528.5,386.2 528.7,383.4 529.0,385.4 529.2,380.5 529.4,380.0 529.7,384.2 529.9,381.2 530.1,376.0 530.4,376.6 530.6,381.2 530.9,378.9 531.1,380.4 531.3,383.6 531.6,384.2 531.8,384.8 532.0,390.5 532.3,390.7 532.5,393.1 532.7,399.7 533.0,399.3 533.2,405.3 533.4,409.8 533.7,412.3 533.9,415.9 534.1,422.7 534.4,429.2 534.6,436.7 534.9,436.3 535.1,444.9 535.3,448.1 535.6,450.0 535.8,457.6 536.0,467.3 536.3,472.6 536.5,478.7 536.7,485.4 537.0,489.7 537.2,495.3 537.4,500.0 537.7,501.8 537.9,500.4 538.1,513.4 538.4,519.4 538.6,518.7 538.9,521.2 539.1,524.9 539.3,527.6 539.6,533.5 539.8,523.3 540.0,532.6 540.3,519.4 540.5,523.8 540.7,527.4 541.0,521.2 541.2,519.4 541.4,513.4 541.7,514.1 541.9,513.8 542.1,515.3 542.4,506.9 542.6,511.8 542.9,512.5 543.1,496.8 543.3,504.8 543.6,503.4 543.8,507.1 544.0,504.0 544.3,510.9 544.5,501.2 544.7,510.0 545.0,511.8 545.2,512.9 545.4,513.8 545.7,511.5 545.9,509.3 546.1,517.4 546.4,529.6 546.6,516.9 546.9,521.5 547.1,522.8 547.3,540.1 547.6,532.3 547.8,538.5 548.0,534.7 548.3,535.6 548.5,540.5 548.7,543.5 549.0,549.3 549.2,543.2 549.4,555.9 549.7,547.1 549.9,561.9 550.1,561.9 550.4,556.8 550.6,568.8 550.9,571.8 551.1,562.3 551.3,567.9 551.6,563.7 551.8,566.4 552.0,565.5 552.3,567.9 552.5,561.0 552.7,564.6 553.0,566.0 553.2,561.4 553.4,585.0 553.7,577.6 553.9,573.9 554.1,563.7 554.4,571.8 554.6,571.3 554.9,563.2 555.1,567.9 555.3,577.0 555.6,573.3 555.8,562.3 556.0,565.5 556.3,565.5 556.5,588.1 556.7,568.8 557.0,599.6 557.2,573.9 557.4,584.4 557.7,583.2 557.9,586.2 558.1,576.0 558.4,584.4 558.6,578.7 558.9,589.4 559.1,578.7 559.3,578.7 559.6,578.7 559.8,588.1 560.0,586.2 560.3,588.1 560.5,576.5 560.7,577.6 561.0,576.0 561.2,573.9 561.4,586.2 561.7,580.3 561.9,577.6 562.1,575.4 562.4,579.2 562.6,593.3 562.9,590.6 563.1,591.9 563.3,588.7 563.6,579.8 563.8,601.1 564.0,585.6 564.3,591.9 564.5,591.3 564.7,596.0 565.0,586.8 565.2,590.6 565.4,574.4 565.7,598.8 565.9,578.7 566.1,575.4 566.4,586.8 566.6,573.9 566.9,581.5 567.1,578.7 567.3,567.9 567.6,575.4 567.8,563.7 568.0,559.7 568.3,577.0 568.5,566.0 568.7,553.1 569.0,547.1 569.2,551.6 569.4,546.7 569.7,543.9 569.9,537.2 570.1,542.2 570.4,533.5 570.6,530.8 570.9,534.1 571.1,526.0 571.3,524.9 571.6,518.2 571.8,518.9 572.0,511.1 572.3,515.7 572.5,514.1 572.7,506.5 573.0,506.1 573.2,506.3 573.4,512.0 573.7,511.3 573.9,508.4 574.1,507.1 574.4,509.3 574.6,514.1 574.9,508.4 575.1,510.0 575.3,510.0 575.6,509.5 575.8,512.5 576.0,508.6 576.3,509.1 576.5,516.9 576.7,514.1 577.0,518.7 577.2,522.5 577.4,524.1 577.7,528.8 577.9,522.2 578.1,525.7 578.4,527.9 578.6,535.3 578.9,541.1 579.1,535.9 579.3,540.5 579.6,556.3 579.8,549.7 580.0,558.9 580.3,553.9 580.5,569.3 580.7,569.8 581.0,565.0 581.2,575.4 581.4,565.5 581.7,565.0 581.9,575.4 582.1,572.8 582.4,582.1 582.6,581.5 582.9,591.3 583.1,588.7 583.3,583.2 583.6,586.8 583.8,590.0 584.0,598.8 584.3,587.5 584.5,591.9 584.7,584.4 585.0,588.7 585.2,581.5 585.4,585.6 585.7,598.1 585.9,586.2 586.1,586.2 586.4,590.6 586.6,583.2 586.9,582.6 587.1,591.9 587.3,594.6 587.6,582.6 587.8,592.6 588.0,589.4 588.3,604.9 588.5,598.8 588.7,594.6 589.0,596.0 589.2,595.3 589.4,591.3 589.7,588.7 589.9,601.8 590.1,587.5 590.4,579.8 590.6,588.1 590.9,580.3 591.1,585.6 591.3,600.3 591.6,604.9 591.8,587.5 592.0,586.8 592.3,590.0 592.5,586.2 592.7,589.4 593.0,579.8 593.2,586.8 593.4,576.0 593.7,585.0 593.9,591.3 594.1,578.1 594.4,582.6 594.6,588.7 594.9,593.3 595.1,590.0 595.3,591.9 595.6,582.1 595.8,577.6 596.0,577.0 596.3,588.1 596.5,586.8 596.7,577.6 597.0,573.9 597.2,582.1 597.4,557.6 597.7,560.6 597.9,553.1 598.1,553.5 598.4,553.1 598.6,547.8 598.9,549.3 599.1,542.5 599.3,534.1 599.6,523.3 599.8,520.9 600.0,522.8 600.3,510.2 600.5,506.5 600.7,494.2 601.0,495.1 601.2,484.8 601.4,478.8 601.7,475.5 601.9,466.9 602.1,460.5 602.4,458.7 602.6,455.3 602.9,447.1 603.1,447.0 603.3,444.5 603.6,435.5 603.8,431.4 604.0,426.9 604.3,421.6 604.5,421.9 604.7,421.2 605.0,418.8 605.2,410.7 605.4,411.2 605.7,410.3 605.9,413.8 606.1,410.6 606.4,411.9 606.6,407.7 606.9,410.1 607.1,410.9 607.3,407.8 607.6,410.6 607.8,411.9 608.0,412.8 608.3,410.3 608.5,414.9 608.7,416.7 609.0,415.6 609.2,421.0 609.4,420.2 609.7,423.2 609.9,426.9 610.1,428.1 610.4,428.5 610.6,431.9 610.9,432.1 611.1,429.7 611.3,434.3 611.6,434.7 611.8,434.4 612.0,433.7 612.3,431.0 612.5,424.4 612.7,425.1 613.0,421.6 613.2,419.5 613.4,410.6 613.7,412.5 613.9,405.8 614.1,404.2 614.4,397.5 614.6,395.1 614.9,388.7 615.1,385.7 615.3,379.7 615.6,375.9 615.8,370.1 616.0,369.5 616.3,367.7 616.5,361.3 616.7,356.6 617.0,352.5 617.2,352.7 617.4,346.5 617.7,346.7 617.9,343.2 618.1,341.0 618.4,340.5 618.6,335.3 618.9,336.5 619.1,337.5 619.3,334.6 619.6,336.9 619.8,332.7 620.0,335.2 620.3,333.1 620.5,333.9 620.7,336.6 621.0,338.4 621.2,337.7 621.4,339.5 621.7,342.4 621.9,342.0 622.1,347.2 622.4,349.3 622.6,351.2 622.9,355.7 623.1,358.0 623.3,360.7 623.6,365.5 623.8,367.6 624.0,373.2 624.3,379.7 624.5,380.9 624.7,388.3 625.0,392.6 625.2,396.3 625.4,405.7 625.7,411.0 625.9,410.8 626.1,417.2 626.4,434.3 626.6,432.2 626.9,438.1 627.1,448.4 627.3,454.8 627.6,458.3 627.8,471.8 628.0,477.9 628.3,484.1 628.5,484.1 628.7,492.4 629.0,498.3 629.2,512.5 629.4,515.0 629.7,521.2 629.9,528.2 630.1,519.7 630.4,529.1 630.6,546.0 630.9,540.1 631.1,545.3 631.3,548.5 631.6,550.0 631.8,563.2 632.0,566.0 632.3,563.2 632.5,572.3 632.7,561.4 633.0,578.7 633.2,580.9 633.4,573.3 633.7,570.3 633.9,562.8 634.1,573.3 634.4,582.1 634.6,578.1 634.9,576.5 635.1,585.0 635.3,581.5 635.6,585.0 635.8,571.3 636.0,590.6 636.3,568.8 636.5,578.7 636.7,583.8 637.0,581.5 637.2,571.8 637.4,574.9 637.7,573.9 637.9,574.4 638.1,572.8 638.4,572.3 638.6,576.5 638.9,565.0 639.1,566.0 639.3,576.0 639.6,561.4 639.8,561.4 640.0,563.2 640.3,552.3 640.5,550.8 640.7,543.2 641.0,546.0 641.2,527.4 641.4,529.6 641.7,524.6 641.9,522.8 642.1,508.9 642.4,501.0 642.6,503.0 642.9,495.7 643.1,489.0 643.3,486.5 643.6,485.6 643.8,472.3 644.0,463.6 644.3,460.1 644.5,453.9 644.7,446.3 645.0,443.3 645.2,432.2 645.4,435.6 645.7,428.5 645.9,423.8 646.1,416.3 646.4,410.0 646.6,409.2 646.9,402.0 647.1,396.5 647.3,395.7 647.6,391.3 647.8,389.0 648.0,385.4 648.3,378.0 648.5,379.1 648.7,376.4 649.0,376.2 649.2,375.5 649.4,371.5 649.7,365.6 649.9,366.8 650.1,368.7 650.4,365.0 650.6,362.9 650.9,360.1 651.1,363.0 651.3,363.5 651.6,359.1 651.8,361.1 652.0,362.4 652.3,361.4 652.5,365.9 652.7,365.5 653.0,365.7 653.2,368.3 653.4,370.3 653.7,372.4 653.9,374.8 654.1,380.2 654.4,381.7 654.6,385.0 654.9,389.0 655.1,391.3 655.3,394.2 655.6,396.3 655.8,400.6 656.0,404.2 656.3,407.1 656.5,413.1 656.7,418.3 657.0,424.4 657.2,428.8 657.4,435.9 657.7,442.7 657.9,443.7 658.1,456.0 658.4,462.6 658.6,468.4 658.9,472.6 659.1,479.2 659.3,477.6 659.6,491.7 659.8,491.2 660.0,503.6 660.3,507.4 660.5,519.7 660.7,529.4 661.0,520.9 661.2,525.7 661.4,537.5 661.7,536.9 661.9,544.2 662.1,544.9 662.4,554.3 662.6,563.7 662.9,558.4 663.1,562.3 663.3,568.8 663.6,575.4 663.8,579.8 664.0,582.1 664.3,576.5 664.5,582.1 664.7,581.5 665.0,577.0 665.2,582.1 665.4,586.2 665.7,576.5 665.9,571.8 666.1,586.2 666.4,580.9 666.6,580.3 666.9,558.4 667.1,581.5 667.3,564.6 667.6,571.3 667.8,553.5 668.0,561.4 668.3,556.8 668.5,558.0 668.7,547.4 669.0,549.7 669.2,555.5 669.4,549.3 669.7,553.9 669.9,538.8 670.1,533.5 670.4,528.5 670.6,528.5 670.9,528.8 671.1,522.2 671.3,522.5 671.6,514.8 671.8,512.5 672.0,516.5 672.3,508.4 672.5,507.8 672.7,505.9 673.0,506.5 673.2,499.0 673.4,498.9 673.7,497.3 673.9,496.0 674.1,491.0 674.4,490.4 674.6,494.8 674.9,491.0 675.1,495.5 675.3,489.7 675.6,487.7 675.8,492.1 676.0,495.7 676.3,493.1 676.5,493.7 676.7,492.8 677.0,489.2 677.2,492.8 677.4,490.7 677.7,498.7 677.9,501.2 678.1,502.2 678.4,496.8 678.6,505.0 678.9,508.4 679.1,499.8 679.3,520.2 679.6,516.5 679.8,514.5 680.0,513.4 680.3,516.5 680.5,519.2 680.7,523.3 681.0,514.5 681.2,532.9 681.4,533.5 681.7,532.3 681.9,532.6 682.1,542.8 682.4,542.5 682.6,538.5 682.9,547.8 683.1,552.3 683.3,537.2 683.6,558.4 683.8,550.0 684.0,546.0 684.3,542.5 684.5,544.2 684.7,549.7 685.0,541.5 685.2,551.6 685.4,551.6 685.7,541.8 685.9,545.6 686.1,546.4 686.4,543.5 686.6,546.7 686.9,547.8 687.1,552.7 687.3,539.5 687.6,536.3 687.8,537.5 688.0,540.1 688.3,528.5 688.5,532.3 688.7,526.8 689.0,519.9 689.2,521.5 689.4,515.7 689.7,513.1 689.9,511.5 690.1,514.5 690.4,502.0 690.6,503.8 690.9,500.2 691.1,494.2 691.3,489.3 691.6,491.2 691.8,484.1 692.0,478.7 692.3,475.4 692.5,475.2 692.7,469.7 693.0,467.7 693.2,466.4 693.4,457.3 693.7,462.8 693.9,455.8 694.1,458.8 694.4,455.1 694.6,451.2 694.9,448.5 695.1,447.0 695.3,447.9 695.6,442.8 695.8,438.7 696.0,438.6 696.3,439.0 696.5,436.1 696.7,439.9 697.0,436.4 697.2,432.8 697.4,430.4 697.7,427.8 697.9,437.0 698.1,428.9 698.4,431.4 698.6,429.5 698.9,427.8 699.1,428.9 699.3,432.7 699.6,433.6 699.8,438.9 700.0,429.8 700.3,432.5 700.5,435.4 700.7,439.1 701.0,440.1 701.2,439.3 701.4,440.6 701.7,449.5 701.9,446.3 702.1,448.7 702.4,446.7 702.6,450.1 702.9,452.7 703.1,452.5 703.3,458.3 703.6,469.1 703.8,460.4 704.0,462.5 704.3,465.8 704.5,467.3 704.7,472.8 705.0,475.8 705.2,476.8 705.4,478.7 705.7,479.0 705.9,479.8 706.1,474.5 706.4,478.2 706.6,481.6 706.9,478.7 707.1,476.8 707.3,480.9 707.6,481.5 707.8,479.2 708.0,474.9 708.3,474.8 708.5,477.6 708.7,470.2 709.0,470.4 709.2,472.9 709.4,474.3 709.7,465.9 709.9,460.8 710.1,459.4 710.4,456.7 710.6,456.1 710.9,452.7 711.1,452.2 711.3,446.7 711.6,444.2 711.8,445.1 712.0,442.5 712.3,439.1 712.5,440.3 712.7,440.5 713.0,434.1 713.2,433.6 713.4,428.3 713.7,428.3 713.9,429.1 714.1,428.1 714.4,427.0 714.6,426.3 714.9,424.1 715.1,421.8 715.3,420.8 715.6,422.3 715.8,426.8 716.0,424.0 716.3,424.9 716.5,427.2 716.7,425.3 717.0,421.8 717.2,423.1 717.4,421.6 717.7,424.9 717.9,427.6 718.1,430.4 718.4,434.1 718.6,430.7 718.9,434.0 719.1,435.4 719.3,437.0 719.6,441.4 719.8,441.7 720.0,445.4 720.3,445.4 720.5,448.0 720.7,454.7 721.0,453.9 721.2,457.3 721.4,461.1 721.7,456.0 721.9,469.2 722.1,468.7 722.4,471.0 722.6,474.5 722.9,477.5 723.1,487.2 723.3,484.9 723.6,492.6 723.8,496.0 724.0,500.0 724.3,502.8 724.5,504.2 724.7,504.6 725.0,521.2 725.2,514.1 725.4,521.7 725.7,515.0 725.9,521.2 726.1,526.3 726.4,534.7 726.6,534.4 726.9,550.4 727.1,537.5 727.3,545.3 727.6,554.3 727.8,549.3 728.0,561.0 728.3,558.4 728.5,548.9 728.7,555.9 729.0,554.7 729.2,579.8 729.4,560.1 729.7,570.3 729.9,563.7 730.1,559.3 730.4,565.0 730.6,568.4 730.9,578.1 731.1,565.0 731.3,560.1 731.6,578.7 731.8,574.9 732.0,572.8 732.3,576.0 732.5,574.9 732.7,572.3 733.0,574.4 733.2,566.0 733.4,584.4 733.7,580.9 733.9,585.0 734.1,588.1 734.4,576.0 734.6,573.9 734.9,572.8 735.1,569.3 735.3,576.5 735.6,585.6 735.8,576.0 736.0,570.8 736.3,558.9 736.5,576.0 736.7,577.6 737.0,563.7 737.2,584.4 737.4,584.4 737.7,572.8 737.9,570.3 738.1,571.8 738.4,579.8 738.6,582.1 738.9,574.4 739.1,571.3 739.3,573.3 739.6,596.0 739.8,596.0 740.0,578.1 740.3,590.0 740.5,578.1 740.7,588.1 741.0,584.4 741.2,578.1 741.4,588.1 741.7,590.0 741.9,582.6 742.1,579.8 742.4,587.5 742.6,577.6 742.9,590.0 743.1,571.3 743.3,578.1 743.6,583.8 743.8,580.3 744.0,567.4 744.3,574.4 744.5,572.3 744.7,582.1 745.0,569.3 745.2,571.8 745.4,581.5 745.7,588.7 745.9,566.4 746.1,579.8 746.4,586.2 746.6,563.2 746.9,570.3 747.1,576.0 747.3,564.6 747.6,571.3 747.8,571.3 748.0,576.5 748.3,573.3 748.5,573.3 748.7,565.5 749.0,573.9 749.2,576.0 749.4,567.9 749.7,574.9 749.9,572.3 750.1,574.9 750.4,562.3 750.6,571.3 750.9,585.6 751.1,548.2 751.3,582.6 751.6,575.4 751.8,580.9 752.0,567.4 752.3,566.9 752.5,561.4 752.7,577.6 753.0,563.7 753.2,561.4 753.4,562.8 753.7,574.9 753.9,571.3 754.1,563.2 754.4,571.3 754.6,561.9 754.9,561.9 755.1,564.1 755.3,559.3 755.6,555.5 755.8,570.8 756.0,569.3 756.3,561.4 756.5,567.4 756.7,555.1 757.0,568.8 757.2,558.9 757.4,576.0 757.7,564.6 757.9,563.7 758.1,572.3 758.4,559.7 758.6,573.9 758.9,564.1 759.1,564.6 759.3,580.9 759.6,561.9 759.8,572.8 760.0,569.8 760.3,570.8 760.5,567.9 760.7,561.4 761.0,566.9 761.2,568.8 761.4,559.7 761.7,553.9 761.9,565.0 762.1,570.3 762.4,568.8 762.6,555.9 762.9,557.6 763.1,559.3 763.3,565.0 763.6,565.5 763.8,558.9 764.0,568.4 764.3,561.0 764.5,562.3 764.7,568.8 765.0,561.0 765.2,558.0 765.4,558.4 765.7,563.2 765.9,562.8 766.1,567.4 766.4,563.2 766.6,566.9 766.9,564.6 767.1,548.9 767.3,565.0 767.6,567.9 767.8,559.7 768.0,561.0 768.3,555.1 768.5,556.3 768.7,567.9 769.0,555.1 769.2,555.9 769.4,563.2 769.7,564.6 769.9,565.5 770.1,556.8 770.4,558.9 770.6,561.9 770.9,561.0 771.1,560.6 771.3,557.6 771.6,567.9 771.8,561.4 772.0,563.7 772.3,553.5 772.5,556.8 772.7,556.3 773.0,555.5 773.2,559.7 773.4,562.3 773.7,559.3 773.9,544.6 774.1,548.5 774.4,550.0 774.6,559.3 774.9,551.6 775.1,550.4 775.3,559.3 775.6,544.9 775.8,549.7 776.0,537.5 776.3,536.9 776.5,537.2 776.7,542.8 777.0,540.8 777.2,538.2 777.4,532.3 777.7,528.8 777.9,512.2 778.1,510.9 778.4,511.8 778.6,511.8 778.9,505.9 779.1,496.0 779.3,494.8 779.6,490.4 779.8,481.5 780.0,475.9 780.3,475.8 780.5,468.3 780.7,462.1 781.0,458.4 781.2,456.1 781.4,446.8 781.7,443.4 781.9,441.4 782.1,432.1 782.4,431.5 782.6,423.7 782.9,422.4 783.1,415.3 783.3,409.7 783.6,407.3 783.8,399.4 784.0,395.4 784.3,394.9 784.5,393.9 784.7,384.8 785.0,384.6 785.2,380.4 785.4,380.0 785.7,376.0 785.9,374.2 786.1,373.1 786.4,368.8 786.6,367.0 786.9,363.8 787.1,363.9 787.3,363.0 787.6,360.9 787.8,358.0 788.0,355.5 788.3,357.0 788.5,356.4 788.7,357.2 789.0,354.1 789.2,354.2 789.4,355.8 789.7,356.5 789.9,357.1 790.1,359.9 790.4,359.3 790.6,361.3 790.9,363.3 791.1,363.2 791.3,365.5 791.6,368.8 791.8,369.9 792.0,373.5 792.3,376.0 792.5,374.8 792.7,383.4 793.0,387.9 793.2,390.3 793.4,387.3 793.7,396.6 793.9,396.5 794.1,401.3 794.4,405.0 794.6,410.4 794.9,414.3 795.1,417.4 795.3,423.7 795.6,425.8 795.8,434.9 796.0,435.0 796.3,439.8 796.5,442.3 796.7,448.0 797.0,453.6 797.2,463.5 797.4,463.8 797.7,470.0 797.9,479.7 798.1,485.7 798.4,485.9 798.6,487.3 798.9,487.0 799.1,496.2 799.3,505.0 799.6,503.4 799.8,514.5 800.0,513.1 800.3,512.5 800.5,517.7 800.7,518.9 801.0,517.4 801.2,515.5 801.4,530.2 801.7,526.8 801.9,533.8 802.1,528.5 802.4,529.6 802.6,524.4 802.9,531.7 803.1,529.4 803.3,527.6 803.6,532.0 803.8,528.8 804.0,525.7 804.3,532.6 804.5,529.1 804.7,530.8 805.0,519.9 805.2,526.8 805.4,527.1 805.7,522.8 805.9,513.1 806.1,525.7 806.4,524.4 806.6,525.7 806.9,514.3 807.1,516.5 807.3,513.1 807.6,514.3 807.8,517.4 808.0,513.8 808.3,515.0 808.5,509.7 808.7,510.4 809.0,513.4 809.2,510.2 809.4,511.1 809.7,508.4 809.9,504.4 810.1,508.4 810.4,506.5 810.6,503.4 810.9,510.2 811.1,503.8 811.3,502.8 811.6,493.9 811.8,500.6 812.0,501.6 812.3,496.0 812.5,496.6 812.7,498.7 813.0,495.1 813.2,493.5 813.4,493.7 813.7,491.9 813.9,494.8 814.1,492.4 814.4,484.0 814.6,485.4 814.9,489.5 815.1,488.7 815.3,490.4 815.6,479.2 815.8,485.6 816.0,478.4 816.3,479.7 816.5,481.2 816.7,482.0 817.0,474.7 817.2,480.7 817.4,482.6 817.7,473.4 817.9,484.4 818.1,478.7 818.4,481.3 818.6,482.1 818.9,476.9 819.1,476.6 819.3,475.9 819.6,478.1 819.8,475.9 820.0,472.9 820.3,470.6 820.5,474.0 820.7,471.9 821.0,471.8 821.2,474.5 821.4,471.0 821.7,480.1 821.9,479.0 822.1,473.3 822.4,470.5 822.6,477.5 822.9,476.4 823.1,475.6 823.3,485.4 823.6,473.8 823.8,474.9 824.0,481.5 824.3,480.0 824.5,474.4 824.7,478.7 825.0,476.4 825.2,480.1 825.4,476.5 825.7,474.5 825.9,477.6 826.1,478.1 826.4,475.6 826.6,476.5 826.9,468.8 827.1,472.3 827.3,475.6 827.6,473.3 827.8,480.0 828.0,474.1 828.3,475.8 828.5,466.9 828.7,470.4 829.0,466.8 829.2,473.2 829.4,468.9 829.7,467.8 829.9,463.4 830.1,467.8 830.4,465.5 830.6,468.9 830.9,467.3 831.1,462.4 831.3,462.4 831.6,465.4 831.8,456.8 832.0,458.9 832.3,464.7 832.5,466.6 832.7,459.5 833.0,465.4 833.2,454.0 833.4,459.2 833.7,455.5 833.9,456.3 834.1,450.5 834.4,458.5 834.6,451.7 834.9,449.4 835.1,455.4 835.3,450.4 835.6,449.9 835.8,452.7 836.0,451.1 836.3,451.4 836.5,446.3 836.7,445.6 837.0,447.9 837.2,445.7 837.4,444.1 837.7,445.2 837.9,444.9 838.1,444.0 838.4,436.9 838.6,439.9 838.9,437.7 839.1,438.8 839.3,444.7 839.6,435.3 839.8,440.9 840.0,438.1 840.3,435.3 840.5,435.5 840.7,439.2 841.0,431.8 841.2,431.9 841.4,432.9 841.7,432.3 841.9,430.8 842.1,431.4 842.4,430.1 842.6,429.7 842.9,428.3 843.1,425.6 843.3,425.0 843.6,429.3 843.8,424.7 844.0,423.4 844.3,421.4 844.5,424.1 844.7,420.1 845.0,425.9 845.2,422.0 845.4,419.5 845.7,416.2 845.9,423.2 846.1,423.0 846.4,417.5 846.6,417.8 846.9,417.6 847.1,413.5 847.3,414.6 847.6,416.5 847.8,416.3 848.0,413.3 848.3,415.3 848.5,409.7 848.7,410.6 849.0,413.3 849.2,408.2 849.4,407.4 849.7,408.1 849.9,410.1 850.1,406.9 850.4,406.2 850.6,407.5 850.9,401.3 851.1,402.0 851.3,408.3 851.6,400.2 851.8,400.8 852.0,401.2 852.3,399.2 852.5,400.2 852.7,397.9 853.0,397.3 853.2,399.2 853.4,397.1 853.7,396.8 853.9,396.3 854.1,395.2 854.4,394.3 854.6,398.1 854.9,393.5 855.1,394.4 855.3,393.8 855.6,391.3 855.8,392.8 856.0,390.7 856.3,388.8 856.5,390.2 856.7,387.3 857.0,384.2 857.2,384.2 857.4,385.1 857.7,384.4 857.9,383.6 858.1,382.2 858.4,381.8 858.6,380.4 858.9,380.9 859.1,378.9 859.3,380.7 859.6,376.3 859.8,377.2 860.0,378.9 860.3,372.6 860.5,374.9 860.7,374.8 861.0,374.8 861.2,372.6 861.4,370.8 861.7,371.4 861.9,367.4 862.1,370.4 862.4,368.8 862.6,369.9 862.9,364.3 863.1,363.4 863.3,366.1 863.6,364.5 863.8,363.9 864.0,363.3 864.3,361.6 864.5,362.0 864.7,361.7 865.0,365.0 865.2,358.1 865.4,360.1 865.7,360.5 865.9,357.4 866.1,356.6 866.4,356.2 866.6,356.2 866.9,354.5 867.1,354.8 867.3,353.8 867.6,352.8 867.8,351.5 868.0,352.7 868.3,348.4 868.5,350.9 868.7,351.4 869.0,349.0 869.2,348.9 869.4,347.4 869.7,348.6 869.9,345.8 870.1,345.8 870.4,347.7 870.6,345.6 870.9,344.7 871.1,343.4 871.3,341.7 871.6,343.1 871.8,344.5 872.0,342.3 872.3,342.7 872.5,340.1 872.7,339.9 873.0,343.3 873.2,339.9 873.4,340.6 873.7,337.8 873.9,338.2 874.1,337.1 874.4,337.4 874.6,334.0 874.9,337.0 875.1,335.3 875.3,336.9 875.6,338.7 875.8,336.3 876.0,336.1 876.3,333.4 876.5,332.3 876.7,332.1 877.0,329.0 877.2,329.7 877.4,330.2 877.7,327.4 877.9,328.6 878.1,323.6 878.4,324.6 878.6,324.6 878.9,322.9 879.1,322.5 879.3,321.3 879.6,321.2 879.8,318.7 880.0,316.3 880.3,316.5 880.5,317.8 880.7,314.9 881.0,314.8 881.2,313.8 881.4,313.2 881.7,314.1 881.9,313.4 882.1,311.3 882.4,309.2 882.6,309.8 882.9,309.6 883.1,307.3 883.3,305.5 883.6,306.3 883.8,302.6 884.0,303.3 884.3,301.1 884.5,298.6 884.7,297.3 885.0,295.4 885.2,294.2 885.4,292.5 885.7,290.3 885.9,290.5 886.1,287.9 886.4,286.6 886.6,286.9 886.9,284.1 887.1,282.4 887.3,280.6 887.6,279.3 887.8,279.3 888.0,276.5 888.3,277.0 888.5,273.6" fill="none" stroke="#000" stroke-width="1.45" stroke-linejoin="round"/><rect x="176.5" y="268.5" width="712.0" height="343.0" fill="none" stroke="#000" stroke-width="1.07"/><text x="222.5" y="631.8" text-anchor="middle">2</text><text x="315.5" y="631.8" text-anchor="middle">4</text><text x="408.5" y="631.8" text-anchor="middle">6</text><text x="501.5" y="631.8" text-anchor="middle">8</text><text x="594.5" y="631.8" text-anchor="middle">10</text><text x="687.5" y="631.8" text-anchor="middle">12</text><text x="780.5" y="631.8" text-anchor="middle">14</text><text x="873.5" y="631.8" text-anchor="middle">16</text><text x="142.3" y="607.9">10<tspan dy="-5.2" font-size="9.33">2</tspan></text><text x="142.3" y="434.9">10<tspan dy="-5.2" font-size="9.33">3</tspan></text><path d="M222.50 611.5v5.2 M315.50 611.5v5.2 M408.50 611.5v5.2 M501.50 611.5v5.2 M594.50 611.5v5.2 M687.50 611.5v5.2 M780.50 611.5v5.2 M873.50 611.5v5.2 M176.5 601.50h-5.2 M176.5 428.50h-5.2 M176.5 609.50h-3.2 M176.5 549.50h-3.2 M176.5 519.50h-3.2 M176.5 497.50h-3.2 M176.5 480.50h-3.2 M176.5 467.50h-3.2 M176.5 455.50h-3.2 M176.5 445.50h-3.2 M176.5 436.50h-3.2 M176.5 376.50h-3.2 M176.5 345.50h-3.2 M176.5 324.50h-3.2 M176.5 307.50h-3.2 M176.5 293.50h-3.2 M176.5 282.50h-3.2 M176.5 272.50h-3.2" stroke="#000" stroke-width="1.07" fill="none"/><text x="531.5" y="651.6" text-anchor="middle">Energy</text><text transform="translate(132.3 441) rotate(-90)" text-anchor="middle">Counts</text></svg>
<div class="lbl" style="left:40px;top:684px">Options</div>
<svg class="abs" style="left:79px;top:692px" width="10" height="8"><path d="M1.3 2 H8.3 L4.8 5.7 Z" fill="#000"/></svg>
<div class="lbl" style="left:98px;top:684px;font-weight:bold">X:</div>
<div class="lbl" style="left:119px;top:684px">16.08399</div>
<div class="lbl" style="left:252px;top:684px;font-weight:bold">Y:</div>
<div class="lbl" style="left:273px;top:684px">1274.921</div>
<div class="btn" style="left:148px;top:718px;width:91px;height:26px;line-height:25px">Fit Again!</div>
<div class="btn" style="left:245px;top:718px;width:91px;height:26px;line-height:25px">Print</div>
<div class="btn" style="left:342px;top:718px;width:91px;height:26px;line-height:25px">HTML Report</div>
<div class="btn" style="left:439px;top:718px;width:101px;height:26px;line-height:25px">Matrix Spectrum</div>
<div class="btn" style="left:546px;top:718px;width:99px;height:26px;line-height:25px">Peaks Spectrum</div>
<div class="btn" style="left:779px;top:718px;width:91px;height:26px;line-height:25px">Dismiss</div>
</body></html>
